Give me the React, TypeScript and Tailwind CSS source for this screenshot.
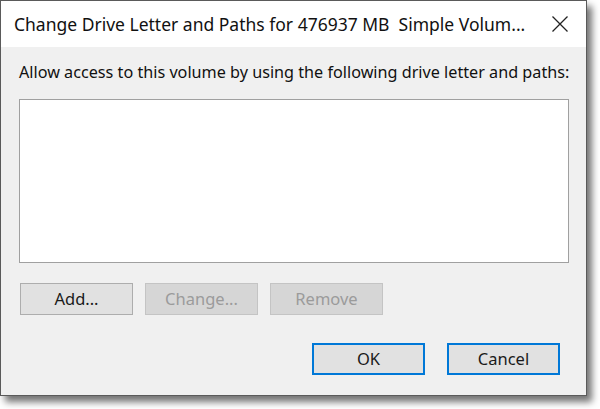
const font = { fontFamily: '"Noto Sans", "Open Sans", sans-serif' };

function Btn({
  label,
  disabled,
  primary,
}: {
  label: string;
  disabled?: boolean;
  primary?: boolean;
}) {
  return (
    <button
      disabled={disabled}
      className={`flex h-[32px] w-[113px] items-center justify-center text-[16.5px] leading-[20px] ${
        disabled
          ? "border border-[#c4c4c4] bg-[#d6d6d6] text-[#9b9b9b]"
          : primary
          ? "border-2 border-[#0078d7] bg-[#e1e1e1] text-[#1a1a1a]"
          : "border border-[#adadad] bg-[#e1e1e1] text-[#1a1a1a]"
      }`}
    >
      {label}
    </button>
  );
}

export default function App() {
  return (
    <div className="h-[409px] w-[600px] bg-white" style={font}>
      <div className="flex h-[396px] w-[587px] flex-col border border-[#5a5a5a] bg-[#f0f0f0] shadow-[5px_6px_7px_rgba(0,0,0,0.55)]">
        <div className="flex h-[46px] items-start justify-between bg-white pl-[13px] pr-[18px] pt-[11px]">
          <span className="whitespace-nowrap text-[17.5px] leading-[24px] text-[#111]">
            Change Drive Letter and Paths for 476937 MB&nbsp; Simple Volum...
          </span>
          <svg width="16" height="16" viewBox="0 0 16 16" className="mt-[4px]">
            <path d="M0.5 0.5L15.5 15.5M15.5 0.5L0.5 15.5" stroke="#222" strokeWidth="1.3" />
          </svg>
        </div>

        <div className="flex flex-1 flex-col pl-[18px] pr-[16px]">
          <p className="mt-[15px] whitespace-nowrap text-[16.2px] leading-[20px] text-[#111]">
            Allow access to this volume by using the following drive letter and paths:
          </p>
          <div className="mt-[17px] h-[164px] w-[550px] border border-[#a0a0a0] bg-white" />

          <div className="mt-[20px] flex gap-[12px] pl-[1px]">
            <Btn label="Add..." />
            <Btn label="Change..." disabled />
            <Btn label="Remove" disabled />
          </div>

          <div className="mt-[28px] flex justify-end gap-[22px] pr-[10px]">
            <Btn label="OK" primary />
            <Btn label="Cancel" primary />
          </div>
        </div>
      </div>
    </div>
  );
}
